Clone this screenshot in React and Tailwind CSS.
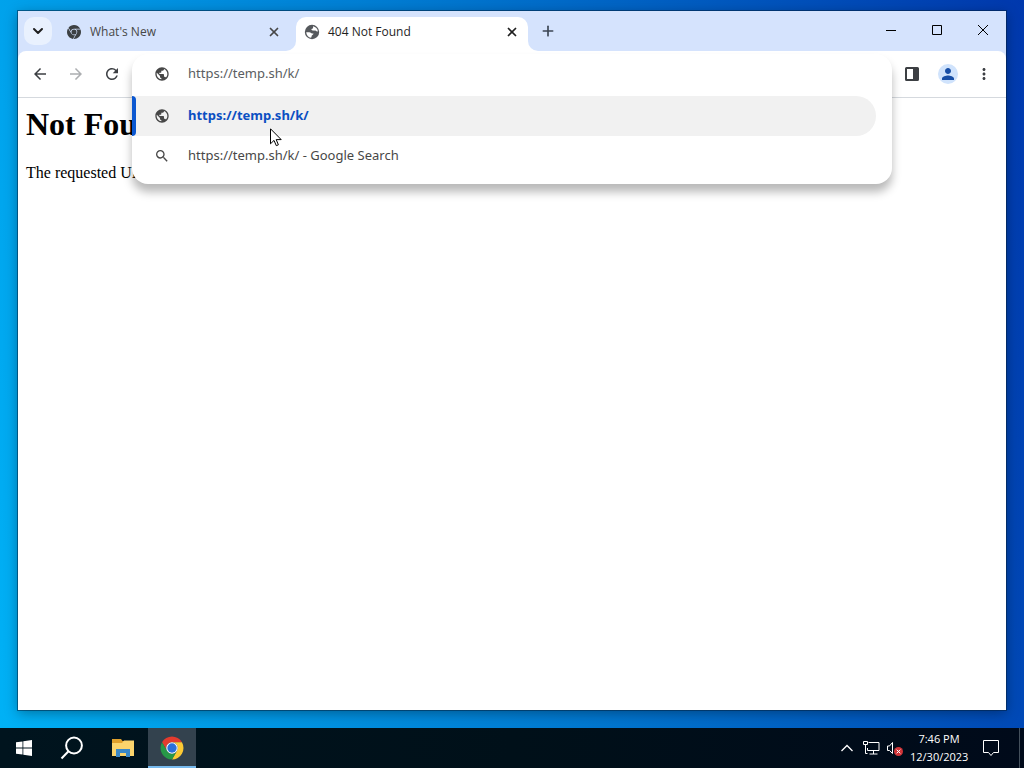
import { ChevronDown, Plus, X } from 'lucide-react';
import { MdArrowBack, MdArrowForward, MdMoreVert, MdPerson, MdPublic, MdRefresh, MdSearch } from 'react-icons/md';
import { SiGooglechrome } from 'react-icons/si';

const SUGGESTIONS = [
  { id: 'url', icon: MdPublic, text: 'https://temp.sh/k/', selected: true },
  { id: 'search', icon: MdSearch, text: 'https://temp.sh/k/', suffix: ' - Google Search' },
];

function DefaultFavicon() {
  return (
    <svg width="16" height="16" viewBox="0 0 16 16" aria-hidden="true">
      <circle cx="8" cy="8" r="7.2" fill="#55585c" />
      <path d="M9 2.2c2.7.5 4.6 2.4 4.9 5-.9.5-1.5-.2-2.200-.5-.7-.3-1.500.2-2.300-.1-.9-.4-1.900-.2-2-1.100 0-.9 1.400-.6 1.700-1.500z" fill="#fff" />
      <path d="M2.200 8.200h3c1.500 0 1.700 1.200 3 1.200h1.300c-.1 1.300-1.300 1.300-1.700 2.200-.3.700-.1 1.600-.8 2.100-2.600-.3-4.600-2.600-4.800-5.500z" fill="#fff" />
    </svg>
  );
}

function ChromeLogo() {
  return (
    <svg width="24" height="24" viewBox="0 0 48 48" aria-hidden="true">
      <path d="M4.1 12.5A23 23 0 0 1 43.9 12.5H24A11.5 11.5 0 0 0 14 29.7z" fill="#e33b2e" />
      <path d="M43.9 12.5A23 23 0 0 1 24 47L34 29.7A11.5 11.5 0 0 0 24 12.5z" fill="#fcc934" />
      <path d="M24 47A23 23 0 0 1 4.1 12.5L14 29.7A11.5 11.5 0 0 0 34 29.7z" fill="#279847" />
      <circle cx="24" cy="24" r="11.5" fill="#fff" />
      <circle cx="24" cy="24" r="9.4" fill="#2a6fdb" />
    </svg>
  );
}

function TabStrip() {
  return (
    <header className="flex h-10 items-end bg-[#d5e3fd] pl-[6px] text-[#1f1f1f]">
      <button type="button" aria-label="Search tabs" className="mb-[6px] flex size-7 items-center justify-center rounded-[10px] bg-[#e9f1fe]">
        <ChevronDown size={16} strokeWidth={3} />
      </button>
      <div className="flex h-[34px] w-[244px] items-center pr-[15px] pb-1 pl-[15px] text-[#474747]">
        <SiGooglechrome size={14} className="text-[#3c4043]" />
        <span className="ml-[9px] flex-1 text-xs">What's New</span>
        <button type="button" aria-label="Close What's New"><X size={14} strokeWidth={3} /></button>
      </div>
      <div className="relative flex h-[34px] w-[232px] items-center rounded-t-[10px] bg-white pr-[9px] pb-1 pl-[8px]">
        <span className="absolute bottom-0 -left-[10px] size-[10px] overflow-hidden">
          <span className="block size-full rounded-br-[10px] shadow-[5px_5px_0_5px_#fff]" />
        </span>
        <span className="absolute -right-[10px] bottom-0 size-[10px] overflow-hidden">
          <span className="block size-full rounded-bl-[10px] shadow-[-5px_5px_0_5px_#fff]" />
        </span>
        <DefaultFavicon />
        <span className="ml-2 flex-1 text-xs">404 Not Found</span>
        <button type="button" aria-label="Close 404 Not Found"><X size={14} strokeWidth={3} /></button>
      </div>
      <button type="button" aria-label="New tab" className="mb-[6px] ml-[6px] flex size-7 items-center justify-center text-[#3c4654]">
        <Plus size={16} strokeWidth={2.5} />
      </button>
      <div className="ml-auto flex self-start text-black">
        <button type="button" aria-label="Minimize" className="flex h-[38px] w-[46px] items-center justify-center">
          <svg width="10" height="10" viewBox="0 0 10 10"><path d="M0 5.5h10" stroke="currentColor" /></svg>
        </button>
        <button type="button" aria-label="Maximize" className="flex h-[38px] w-[46px] items-center justify-center">
          <svg width="10" height="10" viewBox="0 0 10 10"><path d="M.5.5h9v9h-9z" fill="none" stroke="currentColor" /></svg>
        </button>
        <button type="button" aria-label="Close" className="flex h-[38px] w-[46px] items-center justify-center">
          <svg width="10" height="10" viewBox="0 0 10 10"><path d="M0 0l10 10M10 0L0 10" stroke="currentColor" /></svg>
        </button>
      </div>
    </header>
  );
}

function Omnibox() {
  return (
    <div className="absolute inset-x-0 top-[3px] z-10 rounded-2xl bg-white pb-2 font-['Noto_Sans',sans-serif] text-[13px] text-[#474747] shadow-[0_8px_10px_rgba(0,0,0,0.28)]">
      <label className="mb-[2px] flex h-10 items-center pl-[22px]">
        <MdPublic size={16} />
        <input
          type="text"
          aria-label="Address and search bar"
          defaultValue="https://temp.sh/k/"
          className="ml-[18px] min-w-0 flex-1 bg-transparent text-[#5a5d61] outline-none"
        />
      </label>
      <ul>
        {SUGGESTIONS.map(item => {
          const Icon = item.icon;
          return (
            <li key={item.id} className={item.selected ? 'mr-4 rounded-r-full bg-[#f1f1f1]' : 'mr-4'}>
              <button type="button" className="relative flex h-10 w-full items-center pl-[22px] text-left">
                {item.selected && <span className="absolute inset-y-0 left-0 w-1 rounded-r bg-[#0b57d0]" />}
                <Icon size={16} />
                <span className={item.selected ? 'ml-[18px] font-bold text-[#0b4fc2]' : 'ml-[18px]'}>{item.text}</span>
                {item.suffix && <span className="whitespace-pre">{item.suffix}</span>}
              </button>
            </li>
          );
        })}
      </ul>
    </div>
  );
}

function Toolbar() {
  return (
    <div className="bg-[#d5e3fd]">
      <div className="flex h-[47px] items-stretch rounded-t-lg border-b border-[#d5d9de] bg-white text-[#3c3f43]">
        <nav className="flex w-[114px] items-center gap-2 pl-2">
          <button type="button" aria-label="Back" className="flex size-7 items-center justify-center"><MdArrowBack size={18} /></button>
          <button type="button" aria-label="Forward" disabled className="flex size-7 items-center justify-center text-[#acaeb1]"><MdArrowForward size={18} /></button>
          <button type="button" aria-label="Reload" className="flex size-7 items-center justify-center"><MdRefresh size={18} /></button>
        </nav>
        <div className="relative flex-1"><Omnibox /></div>
        <div className="flex w-[114px] items-center gap-2 pl-[6px]">
          <button type="button" aria-label="Side panel" className="flex size-7 items-center justify-center">
            <svg width="14" height="14" viewBox="0 0 14 14">
              <path d="M1.5 0h11A1.5 1.5 0 0 1 14 1.5v11a1.5 1.5 0 0 1-1.5 1.5h-11A1.5 1.5 0 0 1 0 12.5v-11A1.5 1.5 0 0 1 1.5 0zM2 2v10h6V2z" fill="currentColor" fillRule="evenodd" />
            </svg>
          </button>
          <button type="button" aria-label="Profile" className="flex size-7 items-center justify-center">
            <span className="flex size-5 items-center justify-center rounded-full bg-[#d0e3fc] text-[#174ea6]"><MdPerson size={18} /></span>
          </button>
          <button type="button" aria-label="Menu" className="flex size-7 items-center justify-center"><MdMoreVert size={18} /></button>
        </div>
      </div>
    </div>
  );
}

function Cursor() {
  return (
    <svg width="12" height="19" viewBox="0 0 12 19" className="absolute top-[128px] left-[270px] z-20" aria-hidden="true">
      <path d="M.5.8v15l3.5-3.4 2.3 5.3 2.1-.9L6.2 11.6h5z" fill="#fff" stroke="#000" />
    </svg>
  );
}

function Taskbar() {
  return (
    <footer className="flex h-10 items-stretch bg-linear-to-r from-[#00141e] via-[#001019] to-[#000a1a] text-white">
      <button type="button" aria-label="Start" className="flex w-12 items-center justify-center">
        <svg width="16" height="16" viewBox="0 0 16 16">
          <path d="M0 2.3 6.5 1.4v6.2H0zM7.3 1.3 16 0v7.6H7.3zM0 8.400h6.500v6.200L0 13.700zM7.300 8.400H16V16l-8.700-1.300z" fill="currentColor" />
        </svg>
      </button>
      <button type="button" aria-label="Search" className="flex w-12 items-center justify-center">
        <svg width="24" height="24" viewBox="0 0 24 24" fill="none" stroke="currentColor" strokeWidth="2">
          <circle cx="14" cy="9.5" r="7.9" />
          <path d="M8.5 15.2 1.5 22.5" />
        </svg>
      </button>
      <button type="button" aria-label="File Explorer" className="flex w-[52px] items-center justify-center pl-[2px]">
        <svg width="22" height="18" viewBox="0 0 22 18">
          <path d="M0 0h9l1.5 2H22v15H0z" fill="#dfa02c" />
          <path d="M0 4h10l2-2.5h10V17H0z" fill="#fbd46c" />
          <path d="M4 10h14v8h-4v-4H8v4H4z" fill="#3b88c6" />
        </svg>
      </button>
      <button type="button" aria-label="Google Chrome" className="flex w-12 items-center justify-center border-b-2 border-[#76b9ed] bg-[#33424e] pt-[2px]">
        <ChromeLogo />
      </button>
      <div className="ml-auto flex items-center">
        <button type="button" aria-label="Show hidden icons">
          <svg width="12" height="8" viewBox="0 0 12 8" fill="none" stroke="currentColor" strokeWidth="1.3"><path d="M.5 7 6 1.5 11.5 7" /></svg>
        </button>
        <button type="button" aria-label="Network" className="ml-[10px]">
          <svg width="17" height="14" viewBox="0 0 17 14" fill="none" stroke="currentColor">
            <path d="M5.5 1.5H16v8H4.5V7M10.5 9.5V13M6.5 13h8M.5.5h4v3h-4zM2.5 3.5v9h2" />
          </svg>
        </button>
        <button type="button" aria-label="Volume muted" className="ml-[7px]">
          <svg width="16" height="15" viewBox="0 0 16 15" fill="none">
            <path d="M.5 5h2l3-3.5v11l-3-3h-2z" stroke="#fff" />
            <circle cx="11.5" cy="10.5" r="4.5" fill="#d13438" />
            <path d="m9.7 8.7 3.600 3.600m0-3.600-3.600 3.600" stroke="#fff" />
          </svg>
        </button>
        <div className="ml-[7px] w-[58px] text-center text-[11px] leading-[18px]">
          <div>7:46 PM</div>
          <div>12/30/2023</div>
        </div>
        <button type="button" aria-label="Notifications" className="ml-[15px]">
          <svg width="16" height="17" viewBox="0 0 16 17" fill="none" stroke="currentColor"><path d="M.5.5h15v12h-5L8 15.5l-2.500-3h-5z" /></svg>
        </button>
        <div className="ml-[20px] h-10 w-[5px] border-l border-[#44505c]" />
      </div>
    </footer>
  );
}

export default function App() {
  return (
    <div className="relative flex min-h-screen flex-col bg-linear-[78deg] from-[#00b2f6] via-[#0078d0] to-[#0038ad] font-['Open_Sans',sans-serif]">
      <div className="flex flex-1 flex-col px-[18px] pt-[11px] pb-[18px]">
        <div className="flex flex-1 flex-col bg-white shadow-[0_0_0_1px_rgba(0,30,60,0.5),0_3px_12px_rgba(0,0,0,0.35)]">
          <TabStrip />
          <Toolbar />
          <main className="flex-1 overflow-hidden p-2 font-['Liberation_Serif',serif] whitespace-nowrap text-black">
            <h1 className="text-[32px] leading-9 font-bold">Not Found</h1>
            <p className="mt-[22px] text-base leading-[18px]">The requested URL was not found on the server.</p>
          </main>
        </div>
      </div>
      <Taskbar />
      <Cursor />
    </div>
  );
}
